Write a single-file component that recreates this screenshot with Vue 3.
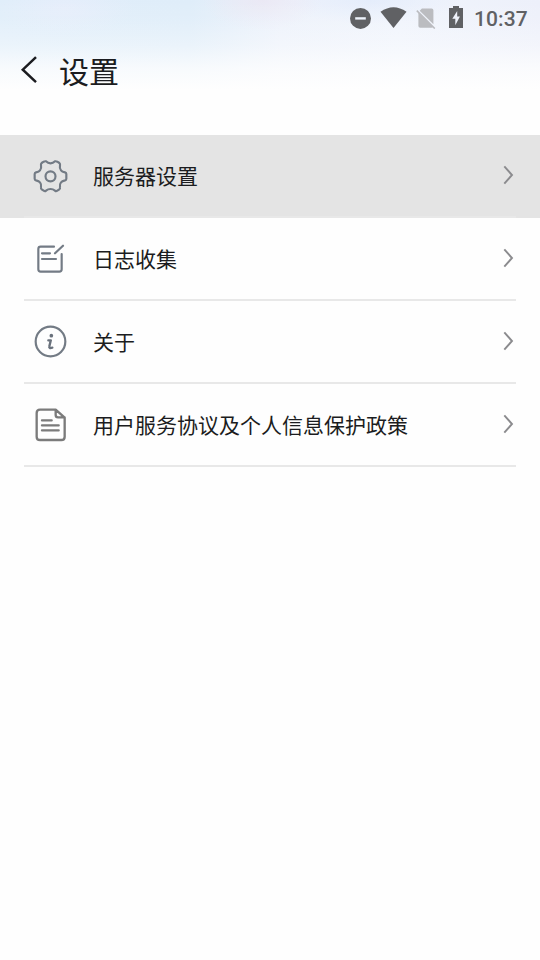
<script setup>
const rows = [
  { id: 'server', label: '服务器设置', box: '36 24 108 108', active: true },
  { id: 'log', label: '日志收集', box: '36 33 108 108' },
  { id: 'about', label: '关于', box: '36 36 108 108' },
  { id: 'policy', label: '用户服务协议及个人信息保护政策', box: '36 36 108 108' },
]
</script>

<template>
  <div class="screen">
    <div class="status">
      <svg class="s-dnd" viewBox="0 0 22 22"><circle cx="10.5" cy="11.400" r="10.5" fill="#606164" /><path d="M5.2 11.400h10.6" stroke="#eef3fc" stroke-width="2.4" /></svg>
      <svg class="s-wifi" viewBox="0 0 27 21"><path d="M.5 4.700Q13.500-4.300 26.500 4.700L13.500 21Z" fill="#606164" /></svg>
      <svg class="s-sim" viewBox="0 0 20 21"><path d="M5.900 .5H15.600Q17.400 .5 17.400 2.300V16.300L3.700 2.700zM2.400 4L17.200 18.800Q16.700 19.800 15.600 19.800H4.200Q2.400 19.800 2.400 18z" fill="#bbbcc0" /><path d="M.8 2.600L18.800 20.600" stroke="#bbbcc0" stroke-width="1.500" /></svg>
      <svg class="s-bat" viewBox="0 0 14 22"><path d="M4 0h6v2h4v20H0V2h4z" fill="#606164" /><path d="M8.200 5L3.300 12.700h3v6.500l4.600-8.600H8.200z" fill="#eef1fa" /></svg>
      <span class="time">10:37</span>
    </div>
    <header class="header">
      <svg class="back" viewBox="0 0 18 28"><path d="M16 1.200L2.800 13.700l13.200 12.400" fill="none" stroke="#1b1c20" stroke-width="2.500" /></svg>
      <h1>设置</h1>
    </header>
    <main>
      <div v-for="row in rows" :key="row.id" class="row" :class="{ active: row.active }">
        <div class="inner">
          <svg class="icon" :class="row.id" :viewBox="row.box">
            <g v-if="row.id === 'server'">
              <path d="M78 34Q84 40 91.500 40Q99 40 105 34Q108 33 112 35L118 39Q121 42 120 46Q118 55 123 61Q126 65 135 67Q139 68 139 72V86Q139 90 135 91Q126 93 123 97Q118 103 120 112Q121 116 118 118L112 122Q108 125 105 122Q99 117 91.500 117Q84 117 78 122Q75 125 71 122L65 118Q62 116 63 112Q65 103 60 97Q57 93 48 91Q44 90 44 86V72Q44 68 48 67Q57 65 60 61Q65 55 63 46Q62 42 65 39L71 35Q75 33 78 34Z" />
              <circle cx="91.500" cy="79" r="15" />
            </g>
            <g v-else-if="row.id === 'log'">
              <path d="M102 50H62Q55 50 55 57V118Q55 125 62 125H118Q125 125 125 118V72M66 70H90M66 87H108M105 70L129 47" />
            </g>
            <g v-else-if="row.id === 'about'">
              <circle cx="91.500" cy="88.500" r="44.500" />
              <circle class="dot" cx="94" cy="71" r="5.500" />
              <path class="stem" d="M85 85H92.500L88 103Q86 110 97 107" />
            </g>
            <g v-else>
              <path d="M107 44H60Q50 44 50 54V125Q50 135 60 135H124Q134 135 134 125V68ZM107 44V60Q107 67 114 67H134M66 76H95M66 91H116M66 106H116" />
            </g>
          </svg>
          <span class="label">{{ row.label }}</span>
          <svg class="arrow" viewBox="0 0 12 20"><path d="M2.300 1.300L10 10L2.300 18.700" /></svg>
        </div>
      </div>
    </main>
  </div>
</template>

<style>
body {
  background: #fefefe;
}
</style>

<style scoped>
.screen {
  height: 960px;
  overflow: hidden;
  font-family: 'Noto Sans CJK SC', sans-serif;
  color: #1b1c20;
  background:
    linear-gradient(to bottom, rgba(254, 254, 254, 0) 0, rgba(254, 254, 254, 0.1) 20px, rgba(254, 254, 254, 0.36) 45px, rgba(254, 254, 254, 0.78) 68px, #fefefe 90px),
    radial-gradient(ellipse 60px 30px at 262px 0, rgba(235, 229, 242, 0.7) 0, rgba(235, 231, 244, 0) 100%),
    radial-gradient(ellipse 70px 26px at 65px 8px, rgba(232, 238, 251, 0.8) 0, rgba(232, 238, 251, 0) 100%),
    radial-gradient(ellipse 90px 24px at 370px 0, rgba(226, 235, 251, 0.8) 0, rgba(226, 235, 251, 0) 100%),
    linear-gradient(to right, #e0eefa 0, #dfedf9 190px, #edf2fb 280px, #f0f4fc 400px, #edf0fa 540px);
}
.status {
  display: flex;
  height: 36px;
  padding-left: 350px;
}
.status svg {
  flex: none;
}
.s-dnd {
  width: 22px;
  height: 22px;
  margin-top: 7px;
}
.s-wifi {
  width: 27px;
  height: 21px;
  margin: 7px 0 0 8px;
}
.s-sim {
  width: 20px;
  height: 21px;
  margin: 7.5px 0 0 8.500px;
}
.s-bat {
  width: 14px;
  height: 22px;
  margin: 6px 0 0 13.500px;
}
.time {
  margin-left: 11px;
  font: 500 21px/38px Roboto, sans-serif;
  letter-spacing: 0.1px;
  color: #606164;
  white-space: nowrap;
}
.header {
  display: flex;
  align-items: center;
  height: 68px;
  margin-bottom: 31px;
  padding-left: 20px;
}
.back {
  width: 18px;
  height: 28px;
}
h1 {
  margin: 0 0 0 21px;
  font-size: 30px;
  line-height: 44px;
  font-weight: 400;
}
.row {
  height: 83px;
  padding: 0 24px;
}
.row.active {
  background: #e4e4e4;
}
.inner {
  display: flex;
  align-items: center;
  box-sizing: border-box;
  height: 83px;
  padding: 0 2px 0 8px;
  border-bottom: 2px solid #e8e8e8;
}
.icon {
  flex: none;
  width: 36px;
  height: 36px;
  margin-top: 1px;
  fill: none;
  stroke: #737b85;
  stroke-width: 6.5;
  stroke-linecap: round;
  stroke-linejoin: round;
}
.icon.policy {
  stroke: #7b7b7b;
  stroke-width: 7;
}
.icon .dot {
  fill: #69717c;
  stroke: none;
}
.icon .stem {
  stroke: #69717c;
  stroke-width: 7;
}
.label {
  flex: 1;
  margin: -1px 0 0 25px;
  font-size: 21px;
  line-height: 32px;
  white-space: nowrap;
}
.arrow {
  flex: none;
  width: 12px;
  height: 20px;
  margin-top: -1px;
  fill: none;
  stroke: #8b8b8e;
  stroke-width: 1.9;
}
</style>
